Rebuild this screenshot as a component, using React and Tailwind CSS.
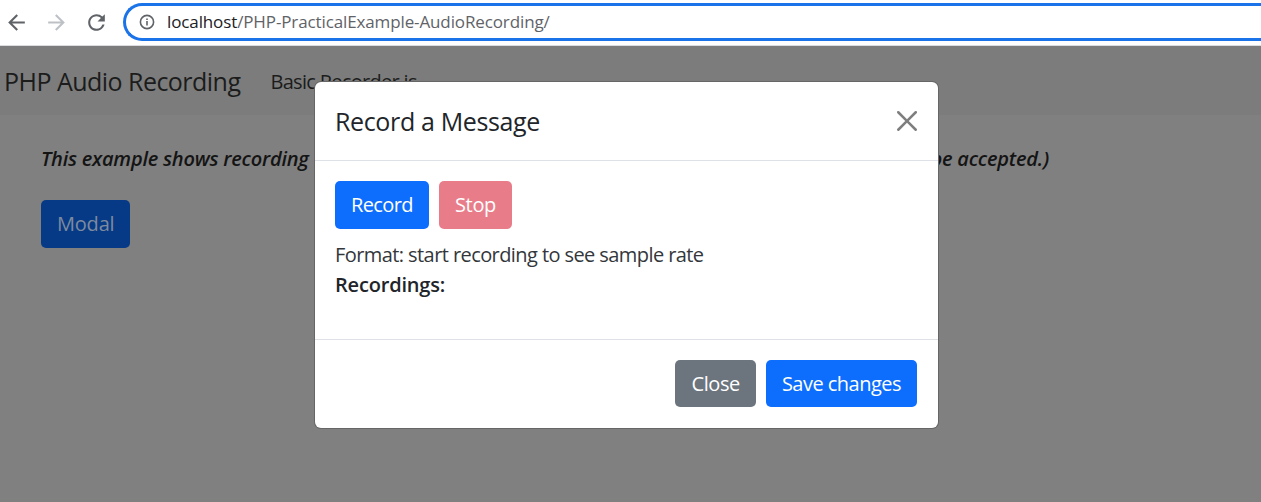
const font = { fontFamily: '"Open Sans", "Noto Sans", sans-serif' }

function ChromeIcon({ d, className }) {
  return (
    <svg viewBox="0 0 24 24" className={className} fill="currentColor">
      <path d={d} />
    </svg>
  )
}

function ModalButton({ className, children }) {
  return (
    <button className={`rounded-[5px] px-4 text-[20px] text-white ${className}`}>
      {children}
    </button>
  )
}

export default function App() {
  return (
    <div className="relative h-[502px] w-[1261px] overflow-hidden bg-[#808080]" style={font}>
      {/* Browser bar */}
      <div className="flex h-[46px] items-center border-b border-[#dadce0] bg-white pb-[1px]">
        <div className="flex w-[123px] shrink-0 items-center pl-[4px]">
          <ChromeIcon className="h-[25px] w-[25px] text-[#5f6368]" d="M20 11H7.83l5.59-5.59L12 4l-8 8 8 8 1.41-1.41L7.83 13H20v-2z" />
          <ChromeIcon className="ml-[15px] h-[25px] w-[25px] text-[#bdc1c6]" d="M4 11h12.17l-5.59-5.59L12 4l8 8-8 8-1.41-1.41L16.17 13H4v-2z" />
          <ChromeIcon className="ml-[15px] h-[25px] w-[25px] text-[#5f6368]" d="M17.65 6.35A7.958 7.958 0 0012 4c-4.42 0-7.99 3.58-7.99 8s3.57 8 7.99 8c3.73 0 6.84-2.55 7.73-6h-2.08A5.99 5.99 0 0112 18c-3.31 0-6-2.69-6-6s2.69-6 6-6c1.66 0 3.14.69 4.22 1.78L13 11h7V4l-2.35 2.35z" />
        </div>
        <div className="flex h-[38px] flex-1 items-center rounded-l-full border-y-[3px] border-l-[3px] border-[#1a73e8] pl-[13px]">
          <svg viewBox="0 0 16 16" className="h-[16px] w-[16px] text-[#5f6368]" fill="none" stroke="currentColor">
            <circle cx="8" cy="8" r="6.6" strokeWidth="1.6" />
            <path d="M8 7v4.4M8 4.4v1.5" strokeWidth="1.6" />
          </svg>
          <span className="ml-[12px] text-[17px] tracking-[-0.12px] text-[#5f6368]">
            <span className="text-[#202124]">localhost</span>/PHP-PracticalExample-AudioRecording/
          </span>
        </div>
      </div>

      {/* Page */}
      <nav className="flex h-[69px] items-center bg-[#7b7c7b] pl-[4px] pt-[2px] text-[#1c1c1c]">
        <span className="text-[25px] tracking-[-0.53px]">PHP Audio Recording</span>
        <span className="ml-[30px] text-[20px] tracking-[-0.7px]">Basic Recorder.js</span>
      </nav>
      <main className="px-[41px] pt-[29px] text-[#141414]">
        <p className="flex w-[1008px] justify-between text-[20px] font-semibold italic tracking-[-0.22px]">
          <span>This example shows recording</span>
          <span>be accepted.)</span>
        </p>
        <button className="mt-[26px] h-[48px] rounded-[5px] bg-[#073a86] px-4 text-[20px] tracking-[-0.2px] text-[#7d8a9e]">
          Modal
        </button>
      </main>

      {/* Dialog sits over the dimmed page */}
      <div className="absolute left-[315px] top-[82px] w-[623px] rounded-[6px] bg-white text-[#212529] shadow-[0_0_0_1px_#666]">
        <div className="flex h-[79px] items-center justify-between border-b border-[#dee2e6] pl-[20px] pr-[21px]">
          <h5 className="text-[25px] leading-none tracking-[-0.36px]">Record a Message</h5>
          <button className="text-black opacity-50">
            <svg viewBox="0 0 16 16" className="h-[20px] w-[20px]" fill="currentColor">
              <path d="M.293.293a1 1 0 011.414 0L8 6.586 14.293.293a1 1 0 111.414 1.414L9.414 8l6.293 6.293a1 1 0 01-1.414 1.414L8 9.414l-6.293 6.293a1 1 0 01-1.414-1.414L6.586 8 .293 1.707a1 1 0 010-1.414z" />
            </svg>
          </button>
        </div>
        <div className="border-b border-[#dee2e6] px-[20px] pb-[39px] pt-[20px]">
          <div className="flex gap-[10px]">
            <ModalButton className="h-[48px] bg-[#0d6efd] tracking-[-0.6px]">Record</ModalButton>
            <ModalButton className="h-[48px] bg-[#e87d89] tracking-[-0.35px]">Stop</ModalButton>
          </div>
          <p className="mt-[11px] text-[20px] leading-[30px] tracking-[-0.58px] text-[#33373b]">Format: start recording to see sample rate</p>
          <p className="text-[20px] font-semibold leading-[30px] tracking-[-0.18px]">Recordings:</p>
        </div>
        <div className="flex justify-end gap-[10px] px-[21px] pb-[21px] pt-[20px]">
          <ModalButton className="h-[47px] bg-[#6c757d] tracking-[-0.4px]">Close</ModalButton>
          <ModalButton className="h-[47px] bg-[#0d6efd] tracking-[-0.52px]">Save changes</ModalButton>
        </div>
      </div>
    </div>
  )
}
